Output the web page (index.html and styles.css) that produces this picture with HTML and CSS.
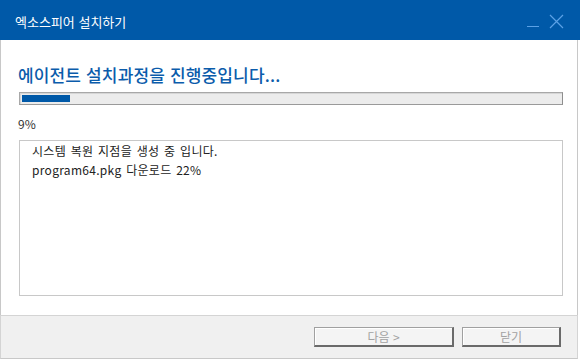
FILE: index.html
```html
<!DOCTYPE html>
<html lang="ko">
<head>
  <meta charset="UTF-8" />
  <title>엑소스피어 설치하기</title>
  <link rel="stylesheet" href="styles.css">
</head>
<body>
  <div class="window">
    <!-- Barre de titre -->
    <div class="titlebar">
      <span class="title">엑소스피어 설치하기</span>
      <div class="controls">
        <svg class="ctl" width="14" height="14" viewBox="0 0 14 14">
          <line x1="1" y1="12.5" x2="13" y2="12.5" stroke="#5ba1e6" stroke-width="1" />
        </svg>
        <svg class="ctl" width="15" height="15" viewBox="0 0 15 15">
          <path d="M1 1 L14 14 M14 1 L1 14" stroke="#5ba1e6" stroke-width="1.2" fill="none" />
        </svg>
      </div>
    </div>

    <div class="content">
      <h1>에이전트 설치과정을 진행중입니다...</h1>
      <div class="progress">
        <div class="progress-fill" style="width: 9%;"></div>
      </div>
      <div class="percent">9%</div>
      <div class="log">
        <p>시스템 복원 지점을 생성 중 입니다.</p>
        <p>program64.pkg 다운로드 22%</p>
      </div>
    </div>

    <div class="footer">
      <button class="btn btn-next" disabled>다음 &gt;</button>
      <button class="btn btn-close" disabled>닫기</button>
    </div>
  </div>
</body>
</html>
```

FILE: styles.css
```css
html, body {
  margin: 0;
  padding: 0;
  background: #fff;
  font-family: "Noto Sans CJK KR", "Noto Sans", sans-serif;
}
.window {
  width: 580px;
  height: 359px;
  display: flex;
  flex-direction: column;
}
.titlebar {
  height: 40px;
  background-color: #0059a8;
  display: flex;
  align-items: center;
  padding-left: 15px;
  box-sizing: border-box;
}
.title {
  color: #fff;
  font-size: 13px;
  letter-spacing: 0;
  margin-top: 2px;
}
.controls {
  margin-left: auto;
  display: flex;
  align-items: center;
  gap: 9px;
  padding-right: 16px;
  margin-top: 2px;
}
.content {
  flex: 1;
  width: 578px;
  box-sizing: border-box;
  border-left: 1px solid #c8c8c8;
  border-right: 1px solid #c8c8c8;
  padding: 24px 0 18px 18px;
}
h1 {
  margin: 0 0 6px -1px;
  font-size: 17px;
  line-height: 22px;
  font-weight: 500;
  color: #0b5cab;
  letter-spacing: 0.15px;
}
.progress {
  width: 544px;
  height: 13px;
  box-sizing: border-box;
  border: 1px solid #a8a8a8;
  border-right-color: #8e8e8e;
  border-bottom-color: #9a9a9a;
  background: #ececec;
  padding: 2px;
  box-shadow: inset 1px 1px #d6d6d6;
}
.progress-fill {
  height: 100%;
  background: #0059a8;
}
.percent {
  margin: 12px 0 9px -1px;
  font-size: 12px;
  line-height: 14px;
  color: #333;
}
.log {
  width: 544px;
  height: 156px;
  box-sizing: border-box;
  border: 1px solid #c8c8c8;
  padding: 0 12px;
  font-size: 12px;
  color: #222;
}
.log p {
  margin: 0;
  line-height: 19px;
  letter-spacing: 0.3px;
  word-spacing: 1px;
}
.footer {
  height: 44px;
  box-sizing: border-box;
  border: 1px solid #d4d4d4;
  border-bottom-color: #c8c8c8;
  width: 578px;
  background: #f0f0f0;
  display: flex;
  justify-content: flex-end;
  align-items: flex-start;
  gap: 8px;
  padding: 11px 16px 0 0;
}
.btn {
  height: 20px;
  box-sizing: border-box;
  border: 1px solid #a0a0a0;
  border-right: 2px solid #6a6a6a;
  border-bottom: 2px solid #6a6a6a;
  background: #f4f4f4;
  box-shadow: inset 1px 1px #fff;
  color: #a2a2a2;
  font-family: "Noto Sans CJK KR", "Noto Sans", sans-serif;
  font-size: 12px;
  line-height: 16px;
  padding: 0;
}
.btn-next {
  width: 140px;
}
.btn-close {
  width: 99px;
}
```
